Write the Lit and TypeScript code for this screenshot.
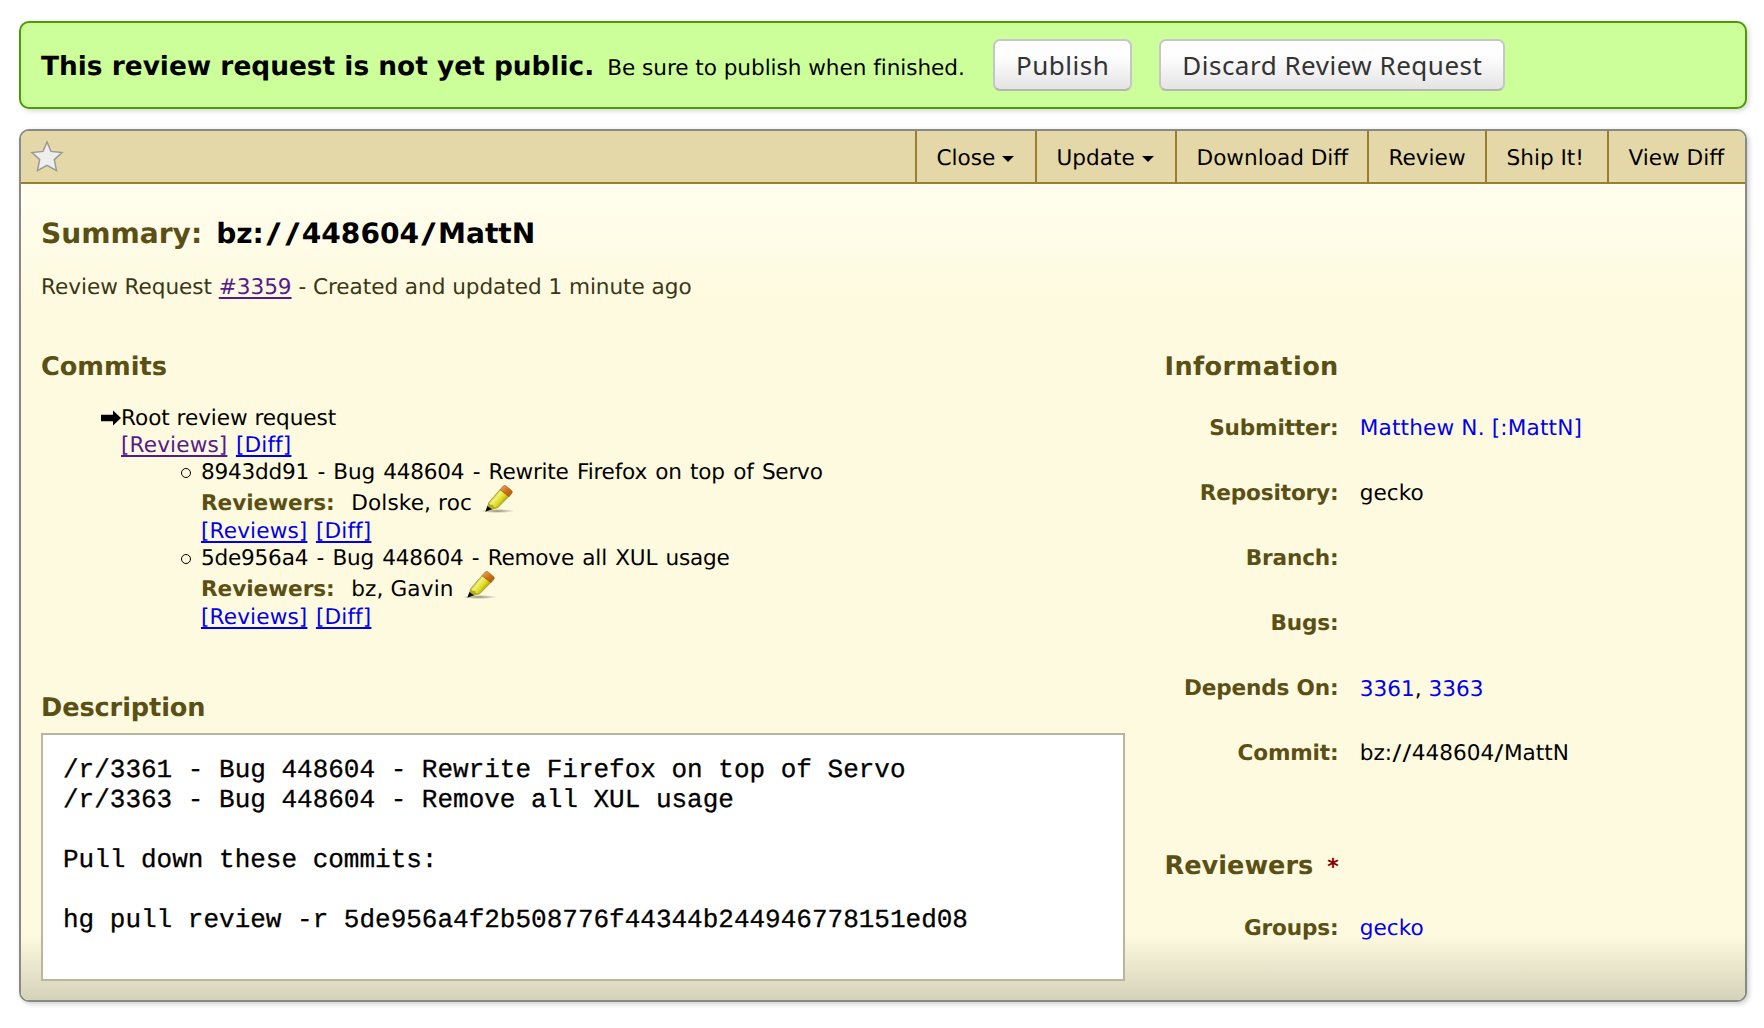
import { LitElement, html, css, svg } from "lit";
import { customElement } from "lit/decorators.js";

const menu = [
  { label: "Close", caret: true, width: 120 },
  { label: "Update", caret: true, width: 140 },
  { label: "Download Diff", caret: false, width: 192 },
  { label: "Review", caret: false, width: 118 },
  { label: "Ship It!", caret: false, width: 122 },
  { label: "View Diff", caret: false, width: 138 },
];

const commits = [
  { title: "8943dd91 - Bug 448604 - Rewrite Firefox on top of Servo", reviewers: "Dolske, roc" },
  { title: "5de956a4 - Bug 448604 - Remove all XUL usage", reviewers: "bz, Gavin" },
];

const description = `/r/3361 - Bug 448604 - Rewrite Firefox on top of Servo
/r/3363 - Bug 448604 - Remove all XUL usage

Pull down these commits:

hg pull review -r 5de956a4f2b508776f44344b244946778151ed08`;

const slash = html`<span class="slash">/</span>`;
const reviewId = html`bz:${slash}${slash}448604${slash}MattN`;

@customElement("edit-pencil")
export class EditPencil extends LitElement {
  static styles = css`
    :host { display: block; width: 36px; height: 28px; }
    svg { display: block; }
  `;
  render() {
    return html`<svg width="36" height="28" viewBox="34 25 108 84">
      ${svg`<defs>
        <linearGradient id="body" gradientUnits="userSpaceOnUse" x1="74" y1="56" x2="106" y2="82">
          <stop offset="0" stop-color="#b3ae10"/><stop offset="0.25" stop-color="#f4f27c"/>
          <stop offset="0.6" stop-color="#dfdc28"/><stop offset="1" stop-color="#a39d0a"/>
        </linearGradient>
        <linearGradient id="cap" x1="0" y1="0" x2="1" y2="1">
          <stop offset="0" stop-color="#eeb070"/><stop offset="0.5" stop-color="#cf7318"/><stop offset="1" stop-color="#a6550a"/>
        </linearGradient>
        <radialGradient id="shade"><stop offset="0" stop-color="#000" stop-opacity="0.45"/><stop offset="1" stop-color="#000" stop-opacity="0"/></radialGradient>
      </defs>
      <ellipse cx="86" cy="103" rx="52" ry="6" fill="url(#shade)"/>
      <path d="M60 78 L95 38 L121 59 L87 93 L64 99 L56 95 Z" fill="url(#body)" stroke="#8d8710" stroke-width="2"/>
      <path d="M60 78 L65 84 L73 84 L76 92 L86 93 L64 100 L55 94 Z" fill="#b5ac1a"/>
      <path d="M94 39 L104 28 Q107 25 111 27 L129 42 Q132 45 130 49 L121 60 Z" fill="url(#cap)" stroke="#a4560e" stroke-width="2"/>
      <path d="M56 88 L70 98 L50 105 Z" fill="#0a0a05"/>`}
    </svg>`;
  }
}

@customElement("app-root")
export class AppRoot extends LitElement {
  static styles = css`
    :host {
      display: block;
      box-sizing: border-box;
      height: 1028px;
      padding: 21px 17px 0 19px;
      background: #fff;
      color: #000;
      font: 21.6px/27px "DejaVu Sans", Verdana, sans-serif;
      text-rendering: geometricPrecision;
      white-space: nowrap;
    }
    * { box-sizing: border-box; }
    .banner {
      display: flex;
      align-items: center;
      height: 88px;
      padding-left: 20px;
      border: 2px solid #4e9a06;
      border-radius: 10px;
      background: #ccff99;
      box-shadow: 2px 2px 5px rgba(0, 0, 0, 0.16);
    }
    .banner-text { display: flex; align-items: baseline; gap: 13px; padding-top: 5px; width: 952px; }
    .banner-title { font-size: 26.4px; font-weight: bold; }
    .banner-note { letter-spacing: -0.05px; }
    .buttons { display: flex; gap: 27px; }
    .button {
      height: 52px;
      padding: 0 21px;
      border: 2px solid #c6c6c6;
      border-bottom-color: #b4b4b4;
      border-radius: 7px;
      background: linear-gradient(#fff, #fdfdfd 35%, #e4e4e4);
      color: #333;
      font: 26px/48px "Noto Sans", "Lucida Grande", sans-serif;
      letter-spacing: 0.5px;
    }
    .panel {
      height: 873px;
      margin-top: 20px;
      border: 2px solid #888a85;
      border-radius: 10px;
      overflow: hidden;
      box-shadow: 2px 2px 5px rgba(0, 0, 0, 0.2);
      background: #fefadf;
    }
    .toolbar {
      display: flex;
      height: 53px;
      border-bottom: 2px solid #997e2d;
      background: #e5d8a8;
    }
    .star { margin: 9px auto 0 9px; }
    .menu-item {
      display: flex;
      align-items: center;
      gap: 7px;
      padding: 3px 0 0 19.5px;
      border-left: 2px solid #997e2d;
    }
    .caret {
      margin-top: 2px;
      border: 6.5px solid transparent;
      border-top-color: #000;
      border-bottom: 0;
    }
    .body {
      height: 816px;
      padding: 0 20px;
      background:
        linear-gradient(to bottom, #fefadf00, #d5d2ba) bottom / 100% 65px no-repeat,
        linear-gradient(to bottom, #fffeee, #fefadf) top / 100% 120px no-repeat,
        #fefadf;
    }
    .summary { display: flex; gap: 14px; padding-top: 36px; font-size: 28.1px; font-weight: bold; }
    .slash { display: inline-block; padding: 0 0.058em; transform: scaleX(1.2); }
    .summary .slash { padding: 0 0.155em; transform: scaleX(1.4); }
    .olive { color: #5a5015; }
    .meta { margin-top: 27px; color: #3a3715; letter-spacing: -0.05px; }
    .blue { color: #0000ee; }
    .visited { color: #551a8b; }
    .link { text-decoration: underline; text-decoration-thickness: 1.5px; text-underline-offset: 3px; }
    .columns { display: grid; grid-template-columns: 1084px 1fr; column-gap: 39.5px; padding-top: 51px; }
    h2 { margin: 0; font-size: 25.6px; line-height: 30px; color: #5a5015; }
    .information { letter-spacing: 0.4px; }
    .commits { padding: 23px 0 0 80px; letter-spacing: 0.14px; }
    .root { display: flex; margin-left: -20px; letter-spacing: -0.05px; }
    .arrow { display: block; margin: 5px 0 0; }
    .links { display: flex; gap: 8.5px; }
    .commit { display: flex; margin-left: 60px; }
    .commit-title { letter-spacing: -0.22px; word-spacing: 1.7px; }
    .bullet { width: 10px; height: 10px; margin: 9px 10px 0 0; border: 1.3px solid #000; border-radius: 50%; }
    .reviewers { display: flex; height: 32px; padding-top: 4px; }
    .reviewers-label { margin-right: 16.5px; font-weight: bold; letter-spacing: -0.05px; color: #5a5015; }
    .pencil { margin: -5px 0 0 8px; }
    .description-title { margin-top: 62px; letter-spacing: -0.1px; }
    .description {
      height: 248px;
      margin: 10px 0 0;
      padding: 19.5px 20px;
      border: 2px solid #b8b5a0;
      background: #fff;
      font: 26px/30px "Liberation Mono", "Courier New", monospace;
      -webkit-text-stroke: 0.3px #000;
    }
    .field { display: grid; grid-template-columns: 174px 1fr; column-gap: 21.3px; height: 65px; }
    .fields { padding-top: 33px; }
    .field-label { text-align: right; font-weight: bold; letter-spacing: -0.15px; color: #5a5015; }
    .name { letter-spacing: 0.16px; }
    .ids { display: block; padding-top: 1px; }
    .required { margin-left: 14px; font-size: 22px; color: #8b0000; }
    .reviewers-title { margin-top: 46.4px; }
    .groups { padding-top: 31.5px; }
  `;

  field(label: string, value: unknown) {
    return html`<div class="field"><span class="field-label">${label}</span><span>${value}</span></div>`;
  }

  render() {
    return html`
      <div class="banner">
        <div class="banner-text">
          <span class="banner-title">This review request is not yet public.</span>
          <span class="banner-note">Be sure to publish when finished.</span>
        </div>
        <div class="buttons">
          <button class="button">Publish</button>
          <button class="button">Discard Review Request</button>
        </div>
      </div>
      <div class="panel">
        <div class="toolbar">
          <svg class="star" width="34" height="33" viewBox="0 0 34 33"><path d="M17 2 L21 11.4 L32 12.6 L24.3 19.6 L26.5 30.6 L17 25.3 L7.5 30.6 L9.7 19.6 L2 12.6 L13 11.4 Z" fill="#eeeeec" stroke="#999a96" stroke-width="1.5"/></svg>
          ${menu.map((m) => html`<div class="menu-item" style="width:${m.width}px"><span>${m.label}</span>${m.caret ? html`<div class="caret"></div>` : ""}</div>`)}
        </div>
        <div class="body">
          <div class="summary"><span class="olive">Summary:</span><span>${reviewId}</span></div>
          <div class="meta">Review Request <span class="link visited">#3359</span> - Created and updated 1 minute ago</div>
          <div class="columns">
            <div>
              <h2>Commits</h2>
              <div class="commits">
                <div class="root">
                  <svg class="arrow" width="20" height="16" viewBox="0 0 20 16"><path d="M0 4.8 H12 V0.5 L20 8 L12 15.5 V11.2 H0 Z"/></svg>
                  <span>Root review request</span>
                </div>
                <div class="links"><span class="link visited">[Reviews]</span><span class="link blue">[Diff]</span></div>
                ${commits.map((c) => html`<div class="commit">
                  <div class="bullet"></div>
                  <div>
                    <div class="commit-title">${c.title}</div>
                    <div class="reviewers"><span class="reviewers-label">Reviewers:</span><span>${c.reviewers}</span><edit-pencil class="pencil"></edit-pencil></div>
                    <div class="links"><span class="link blue">[Reviews]</span><span class="link blue">[Diff]</span></div>
                  </div>
                </div>`)}
              </div>
              <h2 class="description-title">Description</h2>
              <pre class="description">${description}</pre>
            </div>
            <div>
              <h2 class="information">Information</h2>
              <div class="fields">
                ${this.field("Submitter:", html`<span class="blue name">Matthew N. [:MattN]</span>`)}
                ${this.field("Repository:", "gecko")}
                ${this.field("Branch:", "")}
                ${this.field("Bugs:", "")}
                ${this.field("Depends On:", html`<span class="ids"><span class="blue">3361</span>, <span class="blue">3363</span></span>`)}
                ${this.field("Commit:", reviewId)}
              </div>
              <h2 class="reviewers-title">Reviewers<span class="required">*</span></h2>
              <div class="fields groups">${this.field("Groups:", html`<span class="blue">gecko</span>`)}</div>
            </div>
          </div>
        </div>
      </div>
    `;
  }
}
